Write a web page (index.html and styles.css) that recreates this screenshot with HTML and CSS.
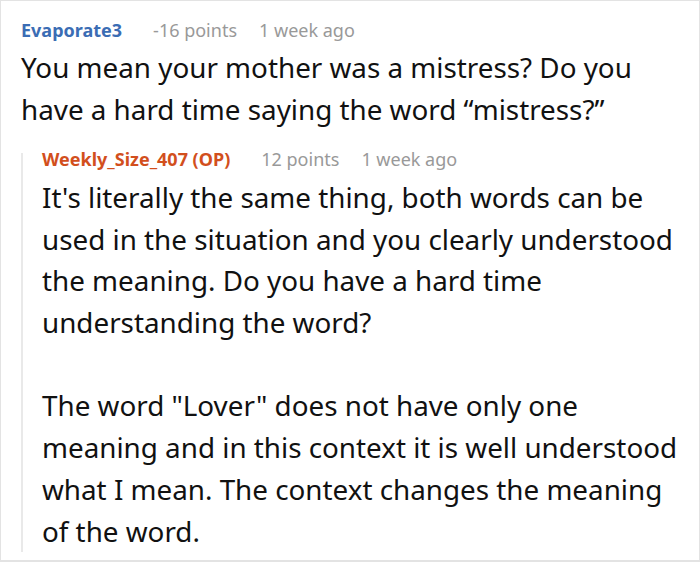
FILE: index.html
```html
<!DOCTYPE html>
<html>
<head>
<meta charset="utf-8">
<link rel="stylesheet" href="styles.css">
</head>
<body>
<div class="card">
  <div class="comment">
    <div class="meta">
      <span class="author author-blue">Evaporate3</span>
      <span class="info">-16 points</span>
      <span class="info">1 week ago</span>
    </div>
    <div class="text text-top">You mean your mother was a mistress? Do you have a hard time saying the word “mistress?”</div>
    <div class="reply">
      <div class="meta meta-reply">
        <span class="author author-op">Weekly_Size_407 (OP)</span>
        <span class="info">12 points</span>
        <span class="info">1 week ago</span>
      </div>
      <div class="text text-reply">
        <p>It's literally the same thing, both words can be used in the situation and you clearly understood the meaning. Do you have a hard time understanding the word?</p>
        <p>The word "Lover" does not have only one meaning and in this context it is well understood what I mean. The context changes the meaning of the word.</p>
      </div>
    </div>
  </div>
</div>
</body>
</html>
```

FILE: styles.css
```css
html, body {
  margin: 0;
  padding: 0;
  background: #ffffff;
}
.card {
  box-sizing: border-box;
  width: 700px;
  height: 562px;
  border: 1px solid #e3e3e3;
  border-bottom-width: 2px;
  font-family: "Noto Sans", "Open Sans", sans-serif;
  color: #111111;
  overflow: hidden;
}
.comment {
  padding: 16.5px 12px 0 20px;
}
.meta {
  display: flex;
  gap: 22px;
  font-size: 18px;
  line-height: 24.5px;
  white-space: nowrap;
}
.author {
  font-weight: 700;
  margin-right: 9px;
}
.author-blue { color: #3b6db4; }
.author-op { color: #d24f1d; }
.info { color: #999999; }
.text {
  font-size: 27.8px;
  line-height: 41.7px;
}
.text-top {
  margin-top: 5px;
}
.reply {
  margin-top: 22.5px;
  border-left: 2px solid #e9e9e9;
  padding-left: 19px;
  margin-bottom: -8px;
}
.meta-reply {
  line-height: 12px;
}
.text-reply {
  margin-top: 12px;
  margin-bottom: -8px;
}
.text-reply p {
  margin: 0;
}
.text-reply p + p {
  margin-top: 41.7px;
}
```
